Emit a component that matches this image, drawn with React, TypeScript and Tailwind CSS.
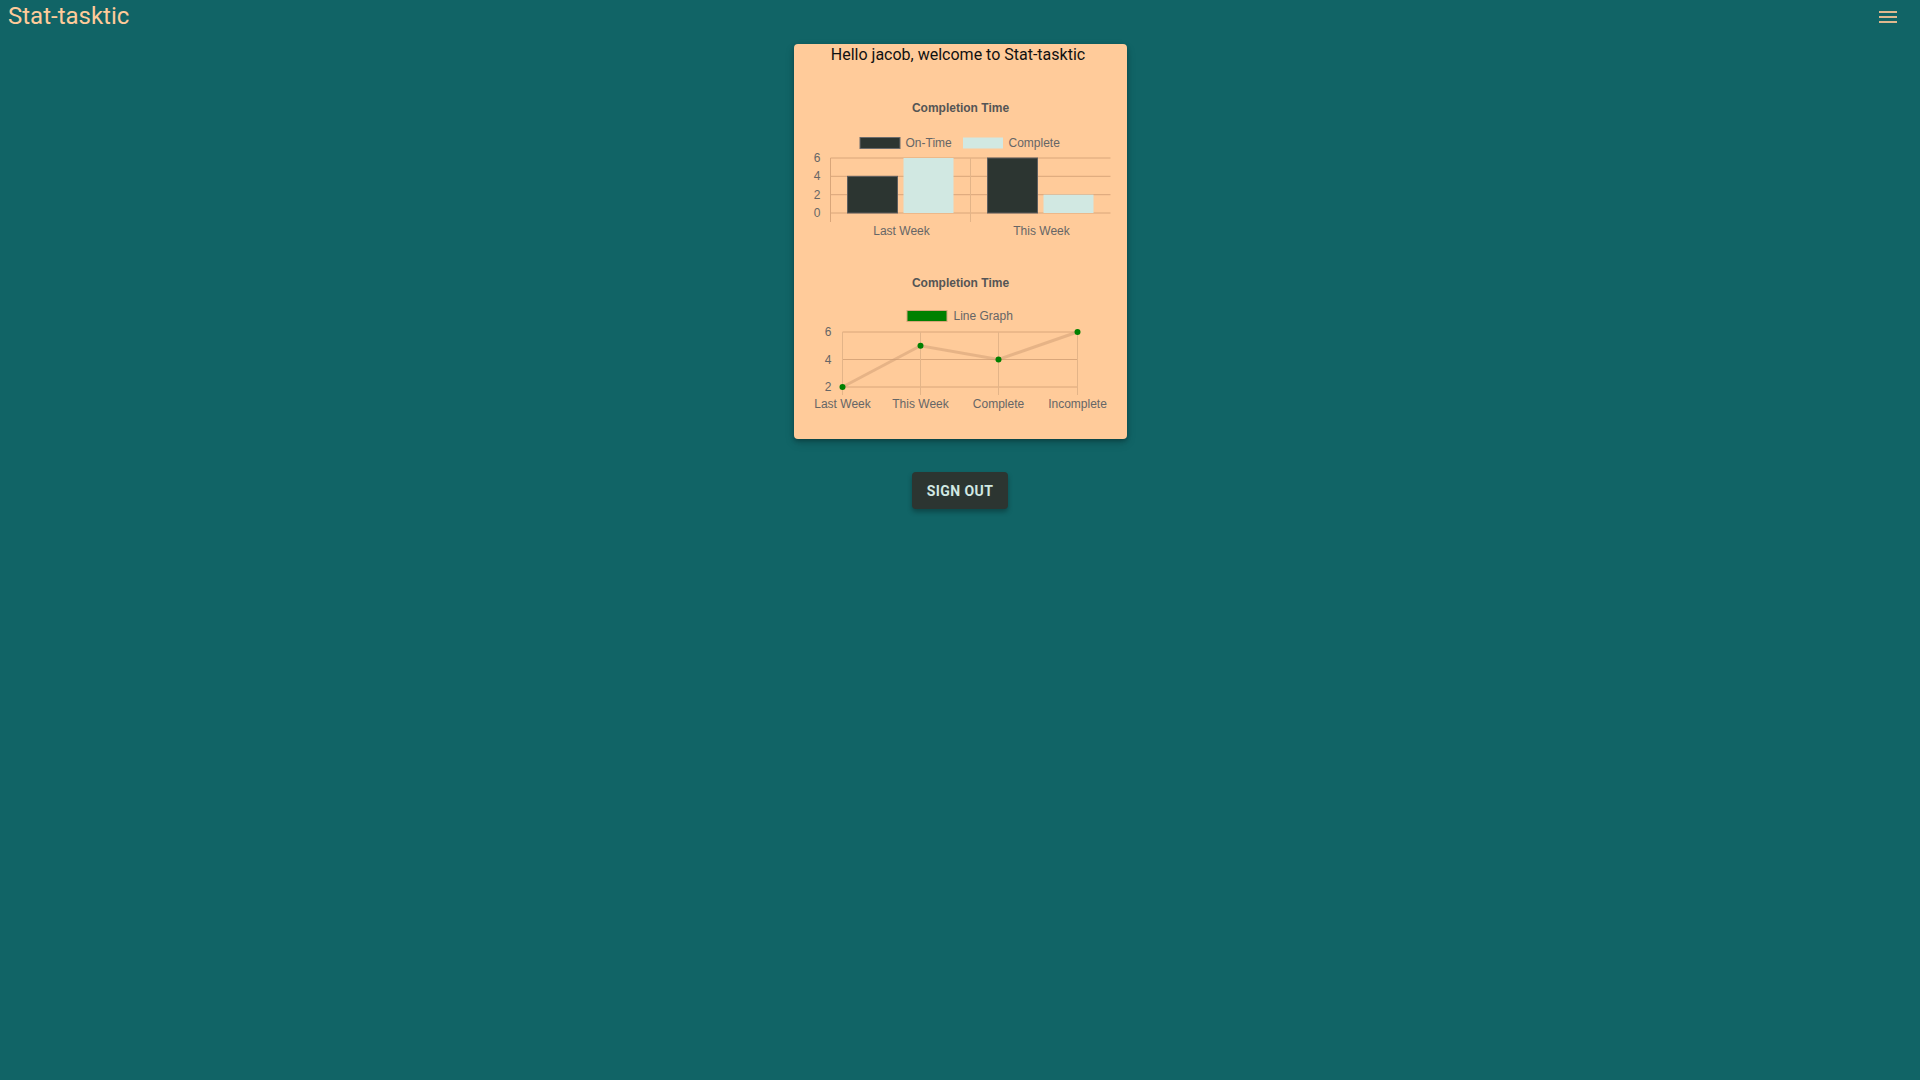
import React from 'react';

const chartFont = '"Liberation Sans", Arial, sans-serif';

function BarChart() {
  const grid = [92, 110.3, 128.7, 147];
  const base = 147;
  const top = 92;
  const y = (v: number) => base - (v / 6) * (base - top);
  const bars = [
    { x: 53, v: 4, dark: true },
    { x: 109, v: 6, dark: false },
    { x: 193, v: 6, dark: true },
    { x: 249, v: 2, dark: false },
  ];
  return (
    <svg width={333} height={179} className="block" style={{ fontFamily: chartFont }}>
      <g transform="translate(0.5,0)">
        <text x={166} y={46} textAnchor="middle" fontSize={12} fontWeight="bold" fill="#555">
          Completion Time
        </text>
        <rect x={65.5} y={71.5} width={40} height={11} fill="#2c3531" stroke="#6b6b6b" strokeWidth={1} />
        <text x={111} y={80.5} fontSize={12} fill="#666">On-Time</text>
        <rect x={168.5} y={71.5} width={40} height={11} fill="#d1e8e2" />
        <text x={214} y={80.5} fontSize={12} fill="#666">Complete</text>
        {grid.map((gy, i) => (
          <line key={i} x1={36} x2={316} y1={gy} y2={gy} stroke="#d9a67a" strokeWidth={1} />
        ))}
        <line x1={36} x2={36} y1={92} y2={156} stroke="#d9a67a" />
        <line x1={176} x2={176} y1={92} y2={156} stroke="#e3b488" />
        {['6', '4', '2', '0'].map((t, i) => (
          <text key={t} x={26} y={grid[i] + 4} textAnchor="end" fontSize={12} fill="#666">
            {t}
          </text>
        ))}
        {bars.map((b, i) => (
          <rect
            key={i}
            x={b.x}
            y={y(b.v)}
            width={50}
            height={base - y(b.v)}
            fill={b.dark ? '#2c3531' : '#d1e8e2'}
            stroke={b.dark ? '#5e5e5e' : 'none'}
            strokeWidth={1}
          />
        ))}
        <text x={107} y={169} textAnchor="middle" fontSize={12} fill="#666">Last Week</text>
        <text x={247} y={169} textAnchor="middle" fontSize={12} fill="#666">This Week</text>
      </g>
    </svg>
  );
}

function LineChart() {
  const xs = [48, 126, 204, 283];
  const base = 142;
  const top = 87;
  const y = (v: number) => base - ((v - 2) / 4) * (base - top);
  const values = [2, 5, 4, 6];
  const labels = ['Last Week', 'This Week', 'Complete', 'Incomplete'];
  const pts = values.map((v, i) => `${xs[i]},${y(v)}`).join(' ');
  return (
    <svg width={333} height={175} className="block" style={{ fontFamily: chartFont }}>
      <g transform="translate(0.5,0)">
        <text x={166} y={42} textAnchor="middle" fontSize={12} fontWeight="bold" fill="#555">
          Completion Time
        </text>
        <rect x={112.5} y={65.5} width={40} height={11} fill="#008000" stroke="#d9a67a" strokeWidth={1} />
        <text x={159} y={75} fontSize={12} fill="#666">Line Graph</text>
        {[87, 114.5, 142].map((gy) => (
          <line key={gy} x1={48} x2={283} y1={gy} y2={gy} stroke="#d9a67a" />
        ))}
        {xs.map((x) => (
          <line key={x} x1={x} x2={x} y1={87} y2={150} stroke="#e3b488" />
        ))}
        {['6', '4', '2'].map((t, i) => (
          <text key={t} x={37} y={[87, 114.5, 142][i] + 4} textAnchor="end" fontSize={12} fill="#666">
            {t}
          </text>
        ))}
        <polyline points={pts} fill="none" stroke="rgba(200,150,110,0.45)" strokeWidth={3} />
        {values.map((v, i) => (
          <circle key={i} cx={xs[i]} cy={y(v)} r={3} fill="#008000" />
        ))}
        {labels.map((l, i) => (
          <text key={l} x={xs[i]} y={163} textAnchor="middle" fontSize={12} fill="#666">
            {l}
          </text>
        ))}
      </g>
    </svg>
  );
}

export default function App() {
  return (
    <div className="min-h-screen w-full bg-[#116466] font-['Roboto','Liberation_Sans',sans-serif]">
      {/* top bar */}
      <div className="flex h-8 items-center justify-between pl-2 pr-[23px]">
        <div className="text-[24px] leading-8 text-[#ffcb9a]">Stat-tasktic</div>
        <svg width={18} height={14} viewBox="0 0 18 14" className="mt-[2px]">
          <rect x={0} y={1} width={18} height={2} fill="#e0b88e" />
          <rect x={0} y={6} width={18} height={2} fill="#e0b88e" />
          <rect x={0} y={11} width={18} height={2} fill="#e0b88e" />
        </svg>
      </div>

      {/* stats card */}
      <div className="mx-auto mt-3 w-[333px] rounded bg-[#ffcb9a] pb-[19px] shadow-[0_2px_4px_rgba(0,0,0,0.25),0_4px_10px_rgba(0,0,0,0.15)]">
        <div className="pr-1 text-center text-base leading-[22px] text-[#111]">
          Hello jacob, welcome to Stat-tasktic
        </div>
        <BarChart />
        <LineChart />
      </div>

      <div className="mt-[33px] flex justify-center">
        <button className="h-[37px] w-[96px] rounded bg-[#2c3531] text-sm font-bold tracking-[0.03em] text-[#d1e8e2] shadow-[0_3px_5px_rgba(0,0,0,0.3)]">
          SIGN OUT
        </button>
      </div>
    </div>
  );
}
